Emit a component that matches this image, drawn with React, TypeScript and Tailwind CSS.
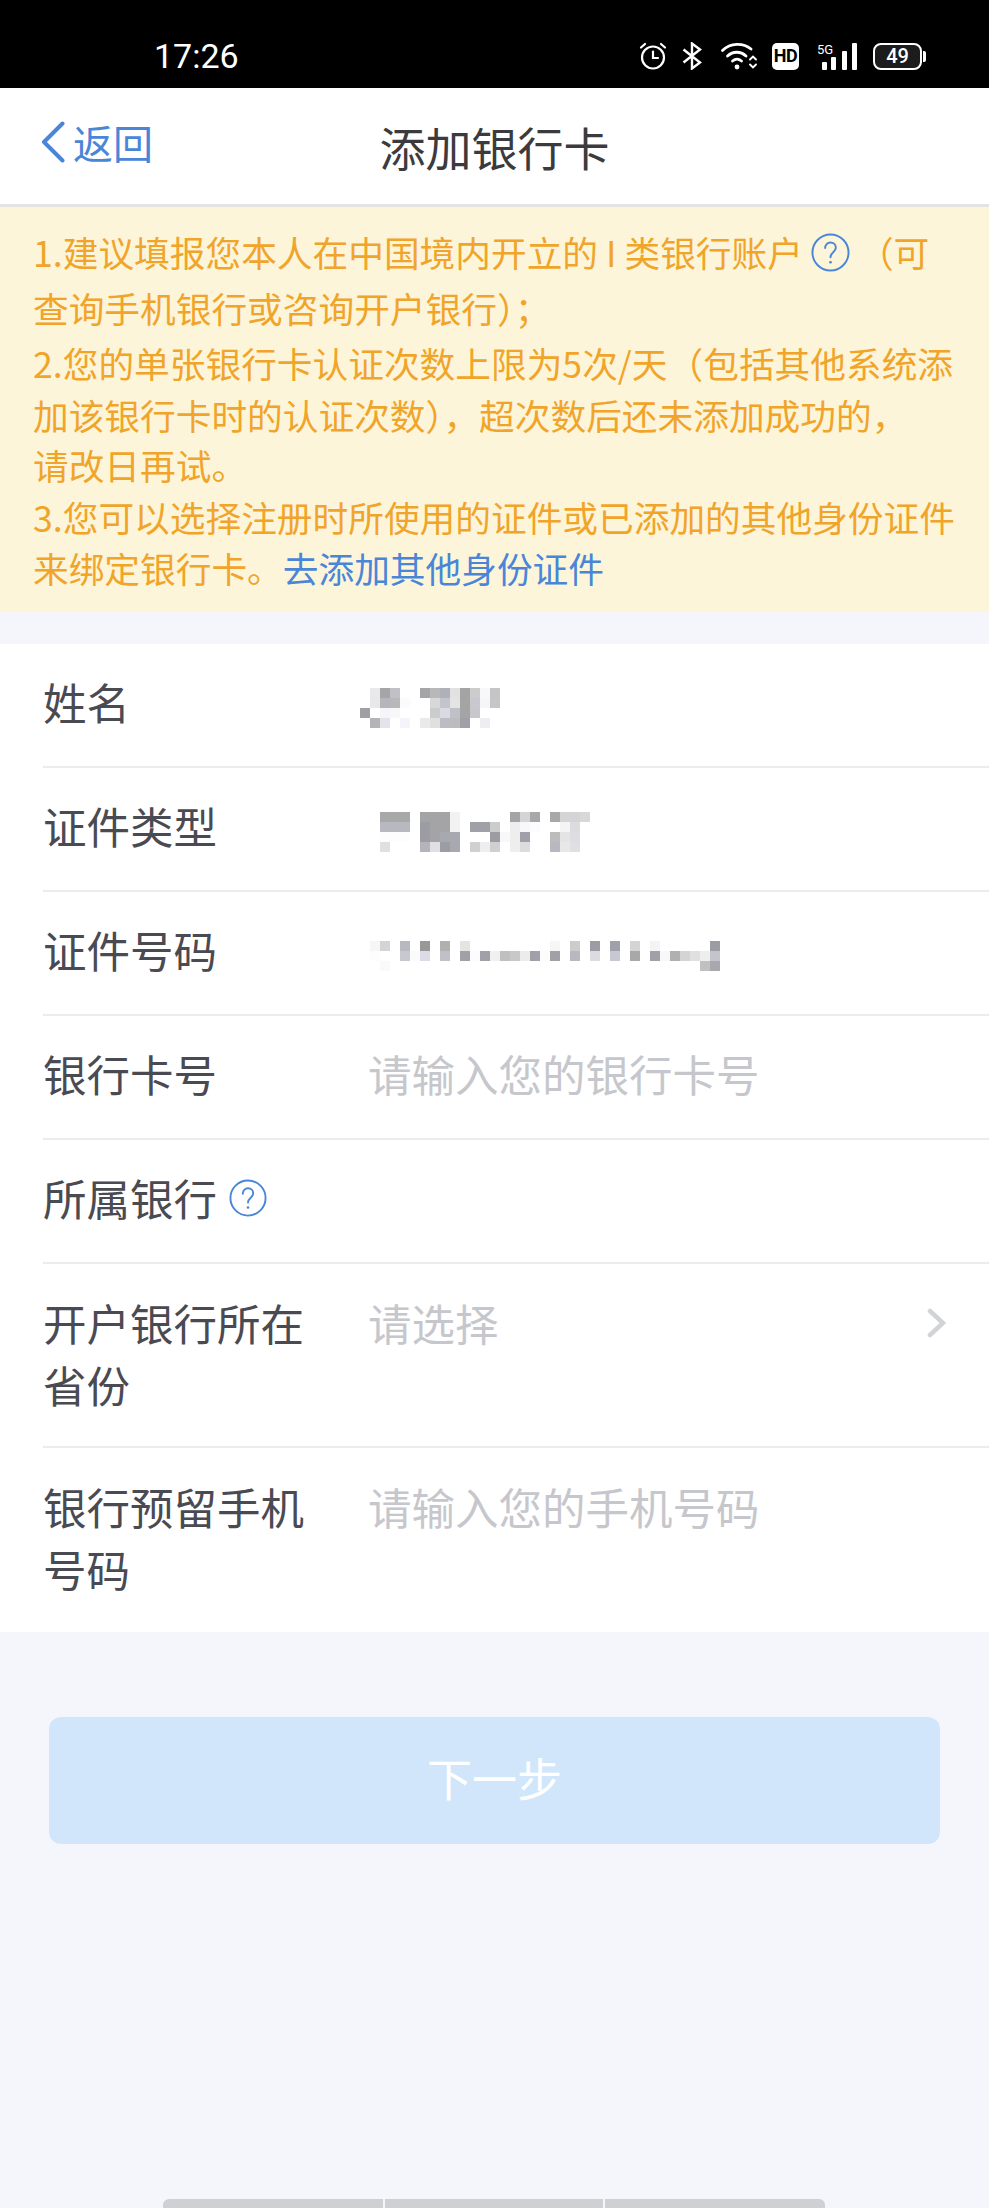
import React from "react";

const font = { fontFamily: '"Noto Sans CJK SC", "Liberation Sans", sans-serif' };

const nameRows = [
  ["", "#e9e9ea", "#a5a5a7", "#c0c0c6", "", "", "#a5a5a8", "#b8b8b8", "#b0b0b8", "#e2e2e2", "#a4a4a4", "#cccccc", "#f8f8f8", "#c5c5c8"],
  ["", "#e8e8ea", "#b6b6ba", "#b8b8ba", "#fbfbfd", "", "", "#d8d8d8", "#c4c4cc", "#e4e4e4", "#a4a4a4", "#c8c8cf", "#f6f6f8", "#c6c6c8"],
  ["#a0a0a4", "", "#f6f6fa", "#f8f8fa", "", "", "", "#cccccc", "#dadae4", "#c0c0c8", "#a4a4a4", "#c8c8cc", "", ""],
  ["", "#b4b4b6", "#e4e4ea", "", "#f4f4fa", "", "#eaeaea", "#e0e0e0", "#bcbcc2", "#bcbcbe", "#a0a0a8", "", "#eeeef2", ""],
];

const typeRows = [
  ["#a8a8a8", "#a8a8a8", "#a8a8a8", "", "#a4a4a4", "#a4a4a4", "#a4a4a4", "#f2f2f2", "", "", "", "", "", "#a4a4a6", "#d4d4d4", "#a8a8a8", "", "#a8a8a8", "#d4d4d4", "#d4d4d4", "#d8d8d8"],
  ["#b8b8c0", "#b8b8c0", "#b8b8c0", "", "#9c9ca4", "#a4a4a6", "#a4a4a6", "#f2f2f2", "", "#a0a0a8", "#a0a0a8", "#cccccc", "", "#eeeeee", "#f8f8fa", "#fcfcfe", "", "", "#f4f4f4", "#dcdce0", ""],
  ["#fdfdfd", "#fdfdfd", "#fdfdfd", "", "#9c9ca2", "#a4a4a6", "#a8a8b0", "#a8a8b0", "", "", "", "#9c9ca2", "#f8f8f8", "#eeeeee", "#a0a0aa", "", "", "#bcbcbc", "#e4e4e4", "#dedee2", ""],
  ["#e0e0e2", "", "", "", "#b4b4bc", "#e0e0e4", "#9c9ca4", "#a8a8ae", "", "#d0d0d0", "#eeeef0", "#d0d0d2", "", "#eeeeee", "#dcdcdc", "", "", "#b8b8c0", "#e8e8e8", "#e0e0e4", ""],
];

const idRows = [
  ["#f6f6f6", "#d4d4d8", "", "#b8b8c0", "", "#989898", "", "#b0b0ae", "", "#e4e4e2", "", "", "", "", "", "", "", "", "#f6f6f6", "", "#cccccc", "", "#9c9ca4", "", "#a0a0a8", "", "#d4d4d4", "", "#f4f4f4", "", "", "", "", "", "#9c9ca4"],
  ["#fdfdfd", "", "", "#c8c8d0", "#fbfbfb", "#dcdce6", "", "#c0c0c8", "", "#a0a0a6", "#fcfcff", "#a0a0a8", "#f0f0f0", "#c0c0c0", "#c8c8c8", "#ececee", "#a0a0a8", "#fcfcfc", "#a0a0a6", "", "#b8b8c0", "", "#dcdce0", "", "#c8c8d2", "", "#a8a8a8", "", "#a0a0a6", "#f8f8f8", "#b0b0b0", "#d4d4d4", "#e0e0e2", "#eeeeec", "#c4c4cc"],
  ["", "#fafafa", "", "", "", "", "", "", "", "", "", "", "", "", "", "", "", "", "", "", "", "", "", "", "", "", "", "", "", "", "", "", "", "#c0c0c0", "#a8a8ae"],
];

function Mosaic({ rows, className }: { rows: string[][]; className: string }) {
  const w = rows[0].length * 10;
  const h = rows.length * 10;
  return (
    <svg viewBox={`0 0 ${w} ${h}`} width={w} height={h} className={className} shapeRendering="crispEdges">
      {rows.map((r, y) =>
        r.map((c, x) => (c ? <rect key={`${x}-${y}`} x={x * 10} y={y * 10} width="10" height="10" fill={c} /> : null))
      )}
    </svg>
  );
}

function Help({ className }: { className: string }) {
  return (
    <svg viewBox="0 0 40 40" className={className} fill="none">
      <circle cx="20" cy="20" r="18.5" stroke="#4a86d8" strokeWidth="2" />
      <path d="M14.5 15.5c0-3.3 2.4-5.8 5.5-5.8s5.500 2.300 5.500 5.400c0 4.400-5.500 4.900-5.500 9.700" stroke="#4a86d8" strokeWidth="2" strokeLinecap="round" />
      <circle cx="20" cy="30" r="1.4" fill="#4a86d8" />
    </svg>
  );
}

function StatusIcons() {
  return (
    <div className="flex items-center text-white" style={{ fontFamily: "Roboto, sans-serif" }}>
      <svg viewBox="0 0 28 28" className="h-[28px] w-[28px]" fill="none" stroke="#fff" strokeWidth="2.2" strokeLinecap="round">
        <circle cx="14" cy="15.500" r="11" />
        <path d="M14 9.500v6.500h5" />
        <path d="M2 5.500 6 2M26 5.500 22 2" />
      </svg>
      <svg viewBox="0 0 20 28" className="ml-[15px] h-[28px] w-[20px]" fill="none" stroke="#fff" strokeWidth="2.4" strokeLinejoin="miter">
        <path d="M1.500 7.500 18 20.500 10 26.500V1.500L18 7.500 1.500 20.500" />
      </svg>
      <svg viewBox="0 0 37 28" className="ml-[19px] h-[28px] w-[37px]" fill="none" stroke="#fff" strokeWidth="2.8" strokeLinecap="round">
        <path d="M1.500 8.500C9.500 .5 22 .5 30 7" />
        <path d="M6.500 14c5.500-5 13-5 18.500 0" />
        <path d="M11.500 19c3-2.500 6-2.500 9 0" />
        <circle cx="16" cy="25" r="2.400" fill="#fff" stroke="none" />
        <path d="M29 17.500l3-3 3 3M29 22.500l3 3 3-3" strokeWidth="1.900" />
      </svg>
      <span className="ml-[14px] flex h-[27px] w-[27px] items-center justify-center rounded-[5px] bg-white text-[18px] font-bold leading-none tracking-[-0.5px] text-black">HD</span>
      <div className="relative ml-[18px] h-[27px] w-[40px]">
        <span className="absolute left-0 top-0 text-[13px] leading-[13px] text-white">5G</span>
        <svg viewBox="0 0 35 27" className="absolute right-0 top-0 h-[27px] w-[35px]" fill="#fff">
          <rect x="0" y="19" width="5" height="8" rx="1" />
          <rect x="9" y="14" width="5" height="13" rx="1" />
          <rect x="20" y="8" width="5" height="19" rx="1" />
          <rect x="30" y="0" width="5" height="27" rx="1" />
        </svg>
      </div>
      <div className="ml-[16px] flex h-[27px] w-[49px] items-center justify-center rounded-[8px] border-2 border-white bg-[#1c1c1c] text-[20px] font-medium leading-none text-white">49</div>
      <div className="ml-[1px] h-[11px] w-[3px] rounded-r-[2px] bg-white" />
    </div>
  );
}

function Row({ label, children, tall, last }: { label: React.ReactNode; children?: React.ReactNode; tall?: boolean; last?: boolean }) {
  return (
    <div className={"ml-[43px] flex " + (last ? "" : "border-b-2 border-[#ececee] ") + (tall ? "h-[184px] pt-[28px]" : "h-[124px] items-center pb-[6px]")}>
      <div className="mr-[43px] w-[282px] shrink-0 text-[43.5px] leading-[62px] text-[#4a4a52]">{label}</div>
      <div className="flex-1 text-[43.5px] leading-[62px] text-[#c6c7cc]">{children}</div>
    </div>
  );
}

const line = "whitespace-nowrap";

export default function App() {
  return (
    <div className="h-[2208px] w-[989px] overflow-hidden bg-[#f4f6fb]" style={font}>
      <div className="flex h-[88px] items-start justify-between bg-black pl-[154px] pr-[63px] pt-[36px] text-white">
        <span className="text-[34px] leading-[40px]" style={{ fontFamily: "Roboto, sans-serif" }}>17:26</span>
        <div className="mt-[6px]"><StatusIcons /></div>
      </div>
      <div className="relative flex h-[116px] items-center justify-center bg-white">
        <span className="text-[46px] text-[#3b3b3f]">添加银行卡</span>
        <div className="absolute left-[41px] top-[26px] flex items-center gap-[8px] text-[40px] leading-[56px] text-[#4a86d8]">
          <svg viewBox="0 0 24 42" className="h-[42px] w-[24px]" fill="none">
            <path d="M21.500 2.500 3 21l18.500 18.500" stroke="#4a86d8" strokeWidth="4" strokeLinecap="round" strokeLinejoin="round" />
          </svg>
          <span>返回</span>
        </div>
      </div>
      <div className="h-[3px] bg-[#e3e3e6]" />
      <div className="h-[405px] bg-[#fdf5da] pl-[33px] pt-[17px] text-[35.7px] text-[#f0a52a]">
        <div className={line + " flex h-[56px] items-center leading-[56px]"}>
          <span>1.建议填报您本人在中国境内开立的 I 类银行账户</span>
          <Help className="mx-[8px] h-[39px] w-[39px]" />
          <span>（可</span>
        </div>
        <div className={line + " h-[56px] leading-[56px]"}>查询手机银行或咨询开户银行）；</div>
        <div className={line + " h-[54px] leading-[54px]"}>2.您的单张银行卡认证次数上限为5次/天（包括其他系统添</div>
        <div className={line + " h-[50px] leading-[50px]"}>加该银行卡时的认证次数），超次数后还未添加成功的，</div>
        <div className={line + " h-[50px] leading-[50px]"}>请改日再试。</div>
        <div className={line + " h-[54px] leading-[54px]"}>3.您可以选择注册时所使用的证件或已添加的其他身份证件</div>
        <div className={line + " h-[48px] leading-[48px]"}>来绑定银行卡。<span className="text-[#4a86d8]">去添加其他身份证件</span></div>
      </div>
      <div className="mt-[32px] h-[988px] bg-white">
        <Row label="姓名"><Mosaic rows={nameRows} className="ml-[-8px] mt-[12px]" /></Row>
        <Row label="证件类型"><Mosaic rows={typeRows} className="ml-[12px] mt-[12px]" /></Row>
        <Row label="证件号码"><Mosaic rows={idRows} className="ml-[2px] mt-[12px]" /></Row>
        <Row label="银行卡号">请输入您的银行卡号</Row>
        <Row label={<span className="flex items-center gap-[12px]">所属银行<Help className="h-[38px] w-[38px]" /></span>} />
        <Row label="开户银行所在省份" tall>
          <div className="flex items-center justify-between pr-[43px]">
            <span>请选择</span>
            <svg viewBox="0 0 19 30" className="h-[30px] w-[19px]" fill="none"><path d="M3 3l13 12L3 27" stroke="#d2d3d7" strokeWidth="4.500" strokeLinecap="round" /></svg>
          </div>
        </Row>
        <Row label="银行预留手机号码" tall last>请输入您的手机号码</Row>
      </div>
      <div className="mx-[49px] mt-[85px] flex h-[127px] items-center justify-center rounded-[12px] bg-[#d2e6fb] pb-[6px] text-[45px] text-white">下一步</div>
      <div className="mx-[163px] mt-[355px] flex h-[10px] w-[662px] gap-[2px] overflow-hidden rounded-t-[6px]">
        <div className="w-[220px] bg-[#cfd0d4]" />
        <div className="w-[218px] bg-[#cfd0d4]" />
        <div className="flex-1 bg-[#cfd0d4]" />
      </div>
    </div>
  );
}
